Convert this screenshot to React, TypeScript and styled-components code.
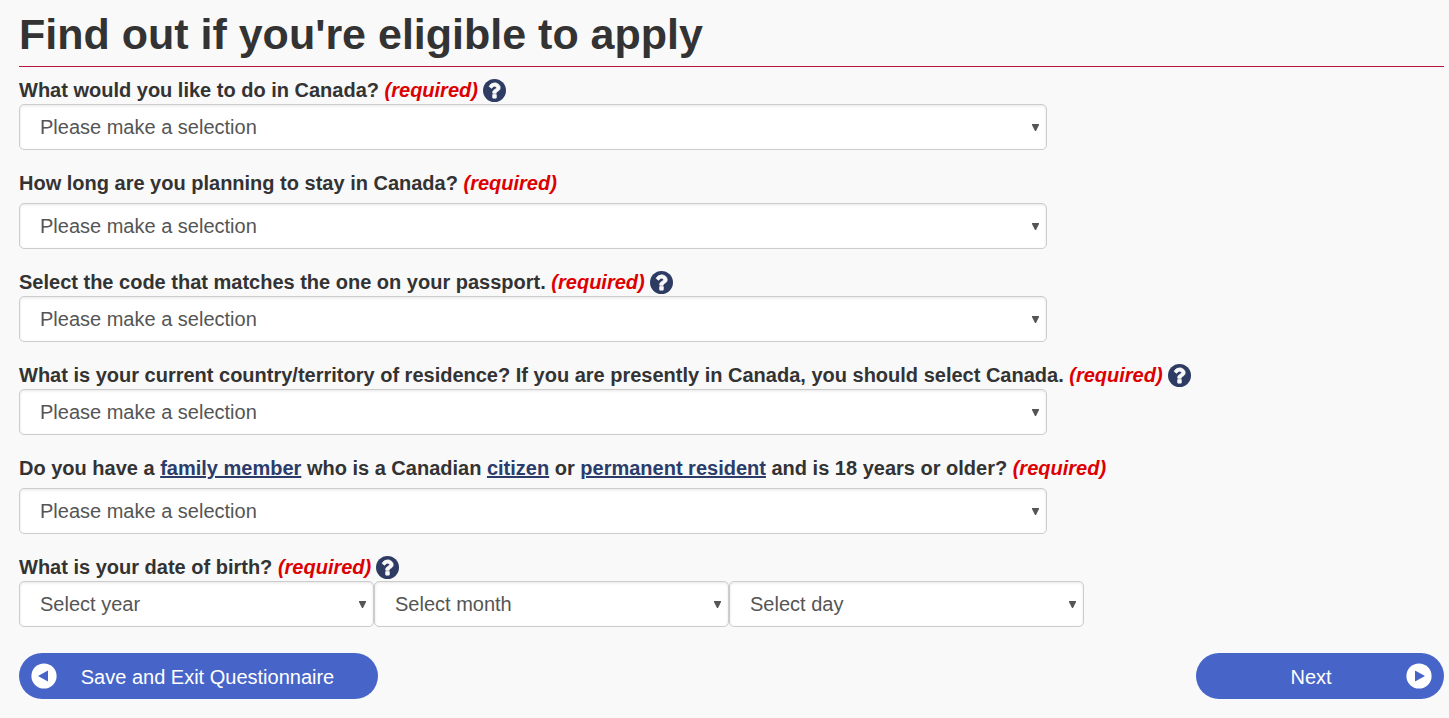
import React, { useId } from "react";
import styled, { createGlobalStyle } from "styled-components";

const GlobalStyle = createGlobalStyle`
  * { box-sizing: border-box; }
  body {
    margin: 0;
    background: #f9f9f9;
    color: #333;
    font-family: "Liberation Sans", Arial, sans-serif;
    font-size: 20px;
    line-height: 28px;
  }
`;

const Page = styled.main`
  padding: 8px 5px 19px 19px;
`;

const Title = styled.h1`
  margin: 0 0 9px;
  padding-bottom: 6px;
  border-bottom: 1px solid #b8173d;
  font-size: 43px;
  line-height: 52px;
`;

const Field = styled.div`
  margin-bottom: 19px;
`;

const LabelRow = styled.div<{ $spaced?: boolean }>`
  display: flex;
  align-items: center;
  gap: 5px;
  margin-bottom: ${(p) => (p.$spaced ? 6 : 0)}px;
  font-weight: bold;
`;

const Required = styled.em`
  color: #dd0000;
`;

const TermLink = styled.a`
  color: #2b3c6b;
  text-decoration: underline;
`;

const HelpButton = styled.button`
  display: flex;
  flex: none;
  margin: 0;
  padding: 0;
  border: 0;
  background: none;
  color: #2e3c64;
  cursor: pointer;

  svg {
    width: 23px;
    height: 23px;
  }
`;

const SelectShell = styled.div<{ $max: number }>`
  display: grid;
  flex: 1 1 0;
  align-items: center;
  max-width: ${(p) => p.$max}px;

  > * {
    grid-area: 1 / 1;
  }

  > svg {
    justify-self: end;
    width: 8px;
    height: 8px;
    margin-right: 7px;
    pointer-events: none;
  }
`;

const Select = styled.select`
  appearance: none;
  width: 100%;
  height: 46px;
  margin: 0;
  padding: 0 24px 0 20px;
  border: 1px solid #ccc;
  border-radius: 5px;
  background: #fff;
  box-shadow: inset 0 1px 3px rgba(0, 0, 0, 0.1);
  color: #555;
  font: inherit;
`;

const DateGroup = styled.div`
  display: flex;
`;

const Actions = styled.div`
  display: flex;
  justify-content: space-between;
  margin-top: 26px;
`;

const PillButton = styled.button<{ $width: number }>`
  display: flex;
  align-items: center;
  width: ${(p) => p.$width}px;
  height: 46px;
  padding: 0 12px;
  border: 0;
  border-radius: 23px;
  background: #4765c8;
  color: #fff;
  font: inherit;
  cursor: pointer;

  svg {
    flex: none;
    width: 26px;
    height: 26px;
  }
`;

const PillText = styled.span<{ $before?: number; $after?: number }>`
  flex: 1;
  padding: 2px ${(p) => p.$after ?? 0}px 0 ${(p) => p.$before ?? 0}px;
  text-align: center;
`;

const HelpIcon = () => (
  <svg viewBox="128 128 1536 1536" aria-hidden="true">
    <circle cx="896" cy="896" r="768" fill="currentColor" />
    <path
      fill="#f9f9f9"
      stroke="#f9f9f9"
      strokeWidth="40"
      d="M1024 1376v-192q0-14-9-23t-23-9h-192q-14 0-23 9t-9 23v192q0 14 9 23t23 9h192q14 0 23-9t9-23zm256-672q0-88-55.5-163t-138.5-116-170-41q-243 0-371 213-15 24 8 42l132 100q7 6 19 6 16 0 25-12 53-68 86-92 34-24 86-24 48 0 85.5 26t37.5 59q0 38-20 61t-68 45q-63 28-115.5 86.5t-52.5 125.5v36q0 14 9 23t23 9h192q14 0 23-9t9-23q0-19 21.5-49.5t54.5-49.5q32-18 49-28.5t46-35 44.5-48 28-60.5 12.5-81z"
    />
  </svg>
);

const ArrowIcon = ({ back }: { back?: boolean }) => (
  <svg viewBox="0 0 26 26" aria-hidden="true">
    <circle cx="13" cy="13" r="12.6" fill="#fff" />
    <path d={back ? "M17 7.5v11L7 13z" : "M9 7.5v11L19 13z"} fill="#4765c8" />
  </svg>
);

interface DropDownProps {
  id?: string;
  text: string;
  max?: number;
  name?: string;
}

const DropDown = ({ id, text, max = 1028, name }: DropDownProps) => (
  <SelectShell $max={max}>
    <Select id={id} aria-label={name} defaultValue="">
      <option value="">{text}</option>
    </Select>
    <svg viewBox="0 0 8 8" aria-hidden="true">
      <path d="M0 1h7v1L4 8H3L0 2z" fill="#555" />
    </svg>
  </SelectShell>
);

interface QuestionProps {
  help?: boolean;
  children: React.ReactNode;
}

const Question = ({ help, children }: QuestionProps) => {
  const id = useId();
  return (
    <Field>
      <LabelRow $spaced={!help}>
        <label htmlFor={id}>
          {children} <Required>(required)</Required>
        </label>
        {help && (
          <HelpButton type="button" aria-label="Help">
            <HelpIcon />
          </HelpButton>
        )}
      </LabelRow>
      <DropDown id={id} text="Please make a selection" />
    </Field>
  );
};

export default function App() {
  return (
    <>
      <GlobalStyle />
      <Page>
        <Title>Find out if you're eligible to apply</Title>
        <form onSubmit={(e) => e.preventDefault()}>
          <Question help>What would you like to do in Canada?</Question>
          <Question>How long are you planning to stay in Canada?</Question>
          <Question help>Select the code that matches the one on your passport.</Question>
          <Question help>
            What is your current country/territory of residence? If you are presently in Canada, you
            should select Canada.
          </Question>
          <Question>
            Do you have a <TermLink href="#family">family member</TermLink> who is a Canadian{" "}
            <TermLink href="#citizen">citizen</TermLink> or{" "}
            <TermLink href="#resident">permanent resident</TermLink> and is 18 years or older?
          </Question>
          <div role="group" aria-labelledby="birth-date">
            <LabelRow>
              <label id="birth-date" htmlFor="birth-year">
                What is your date of birth? <Required>(required)</Required>
              </label>
              <HelpButton type="button" aria-label="Help">
                <HelpIcon />
              </HelpButton>
            </LabelRow>
            <DateGroup>
              <DropDown id="birth-year" text="Select year" max={355} />
              <DropDown name="Month" text="Select month" max={355} />
              <DropDown name="Day" text="Select day" max={355} />
            </DateGroup>
          </div>
          <Actions>
            <PillButton type="button" $width={359}>
              <ArrowIcon back />
              <PillText $after={8}>Save and Exit Questionnaire</PillText>
            </PillButton>
            <PillButton type="submit" $width={248}>
              <PillText $before={8}>Next</PillText>
              <ArrowIcon />
            </PillButton>
          </Actions>
        </form>
      </Page>
    </>
  );
}
